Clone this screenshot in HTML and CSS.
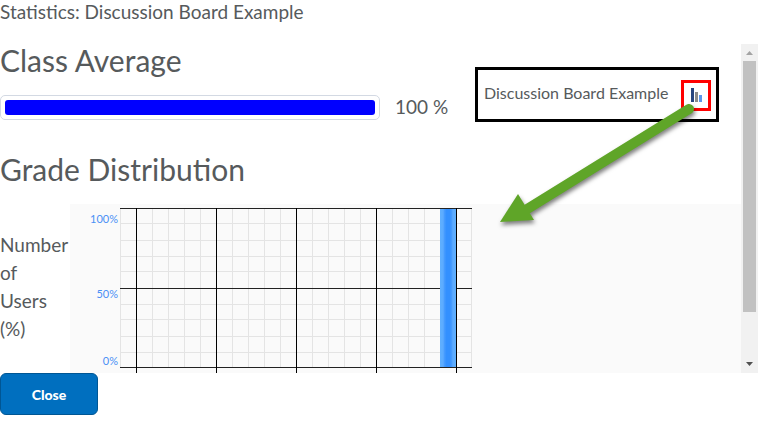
FILE: index.html
```html
<!DOCTYPE html>
<html lang="en">
<head>
  <meta charset="UTF-8">
  <meta name="viewport" content="width=device-width, initial-scale=1">
  <title>Statistics: Discussion Board Example</title>
  <link rel="stylesheet" href="styles.css">
</head>
<body>
  <header class="dialog-title">Statistics: Discussion Board Example</header>

  <div class="dialog-body">
    <main class="content">
      <h2>Class Average</h2>
      <div class="average">
        <div class="meter"><div class="meter-fill" style="width: 100%"></div></div>
        <span>100 %</span>
      </div>

      <h2>Grade Distribution</h2>
      <div class="distribution">
        <p class="axis-title">Number<br>of<br>Users<br>(%)</p>
        <div class="chart">
          <svg width="402" height="169" viewBox="0 0 402 169" role="img" aria-label="Grade distribution">
            <defs>
              <linearGradient id="bar">
                <stop offset="0" stop-color="#5fb0ff"/>
                <stop offset="0.2" stop-color="#5cabff"/>
                <stop offset="0.25" stop-color="#4a9eff"/>
                <stop offset="0.4" stop-color="#3390ff"/>
                <stop offset="0.6" stop-color="#3390ff"/>
                <stop offset="0.75" stop-color="#4a9eff"/>
                <stop offset="0.8" stop-color="#5cabff"/>
                <stop offset="1" stop-color="#5fb0ff"/>
              </linearGradient>
            </defs>
            <!-- minor grid -->
            <path class="grid-minor" d="M50.5 4v160M82.5 4v160M98.5 4v160M114.5 4v160M130.5 4v160M162.5 4v160M178.5 4v160M194.5 4v160M210.5 4v160M242.5 4v160M258.5 4v160M274.5 4v160M290.5 4v160M322.5 4v160M338.5 4v160M354.5 4v160M370.5 4v160M401.5 4v160"/>
            <path class="grid-minor" d="M50 19.5h352M50 36.5h352M50 52.5h352M50 67.5h352M50 100.5h352M50 115.5h352M50 132.5h352M50 148.5h352"/>
            <!-- major grid -->
            <path class="grid-major" d="M50 4.5h352M50 84.5h352M50 163.5h352"/>
            <rect x="370" y="5" width="16" height="158" fill="url(#bar)"/>
            <path class="grid-tick" d="M66.5 4v165M146.5 4v165M226.5 4v165M306.5 4v165M386.5 4v165"/>
            <text x="48" y="19">100%</text>
            <text x="48" y="94">50%</text>
            <text x="48" y="161">0%</text>
          </svg>
        </div>
      </div>
    </main>

    <div class="scrollbar" aria-hidden="true">
      <svg width="17" height="17"><path d="M5 11h7L8.5 7z" fill="#a3a3a3"/></svg>
      <div class="thumb"></div>
      <svg width="17" height="17"><path d="M5 6h7L8.5 10z" fill="#505050"/></svg>
    </div>
  </div>

  <button class="close" type="button">Close</button>

  <div class="callout">
    <span class="callout-label">Discussion Board Example</span>
    <button class="stats" type="button" aria-label="View statistics">
      <svg width="12" height="15">
        <rect x="1" y="0" width="3" height="14" fill="#27457f"/>
        <rect x="5" y="4" width="3" height="10" fill="#8b8b8b"/>
        <rect x="9" y="7" width="3" height="7" fill="#5b95ea"/>
      </svg>
    </button>
  </div>

  <svg class="arrow" width="210" height="140" viewBox="0 0 210 140" aria-hidden="true">
    <path d="M199 19L34 121" stroke="#5fa528" stroke-width="10" stroke-linecap="round"/>
    <path d="M10 132L28 104L44 130z" fill="#5fa528"/>
  </svg>
</body>
</html>
```
FILE: styles.css
```css
* {
  box-sizing: border-box;
}
body {
  position: relative;
  margin: 0;
  background: #fff;
  color: #565a5c;
  font-family: Lato, "Open Sans", sans-serif;
  font-size: 19px;
  line-height: 28px;
}
h2 {
  margin: 0;
  font-size: 30px;
  font-weight: 400;
  line-height: 32px;
}
.dialog-title {
  padding-bottom: 20px;
  line-height: 24px;
}
.dialog-body {
  display: flex;
}
.content {
  flex: 1;
}
.average {
  display: flex;
  align-items: center;
  gap: 15px;
  margin: 17px 0 32px;
}
.meter {
  width: 380px;
  padding: 4px;
  border: 1px solid #d3d9e3;
  border-radius: 5px;
}
.meter-fill {
  height: 15px;
  background: #00f;
  border-radius: 3px;
}
.distribution {
  display: flex;
  align-items: center;
  margin-top: 19px;
}
.axis-title {
  width: 70px;
  margin: 0;
  padding-bottom: 4px;
}
.chart {
  flex: 1;
  background: #fafafa;
}
.chart svg {
  display: block;
}
.chart text {
  fill: #4a90f5;
  font-size: 11px;
  text-anchor: end;
}
.grid-minor {
  stroke: #e4e4e4;
}
.grid-major {
  stroke: #222;
}
.grid-tick {
  stroke: #000;
}
.scrollbar {
  display: flex;
  flex-direction: column;
  width: 17px;
  background: #f1f1f1;
}
.thumb {
  width: 13px;
  height: 251px;
  margin: 0 auto auto;
  background: #c1c1c1;
}
.close {
  display: block;
  width: 98px;
  height: 42px;
  border: 1px solid #005694;
  border-radius: 6px;
  background: #006fbf;
  color: #fff;
  font-family: inherit;
  font-size: 14px;
  font-weight: 900;
}
/* callout and arrow lie over the dialog */
.callout {
  position: absolute;
  top: 67px;
  left: 475px;
  display: flex;
  align-items: center;
  justify-content: space-between;
  width: 244px;
  height: 55px;
  padding: 2px 5px 0 6px;
  border: 3px solid #000;
  background: #fff;
  font-size: 16px;
}
.callout-label {
  padding-bottom: 6px;
}
.stats {
  display: flex;
  align-items: center;
  justify-content: center;
  width: 30px;
  height: 31px;
  padding: 0;
  border: 3px solid #f00;
  background: none;
}
.arrow {
  position: absolute;
  top: 90px;
  left: 490px;
  filter: drop-shadow(1px 3px 2px rgba(0, 0, 0, 0.5));
  pointer-events: none;
}
```
